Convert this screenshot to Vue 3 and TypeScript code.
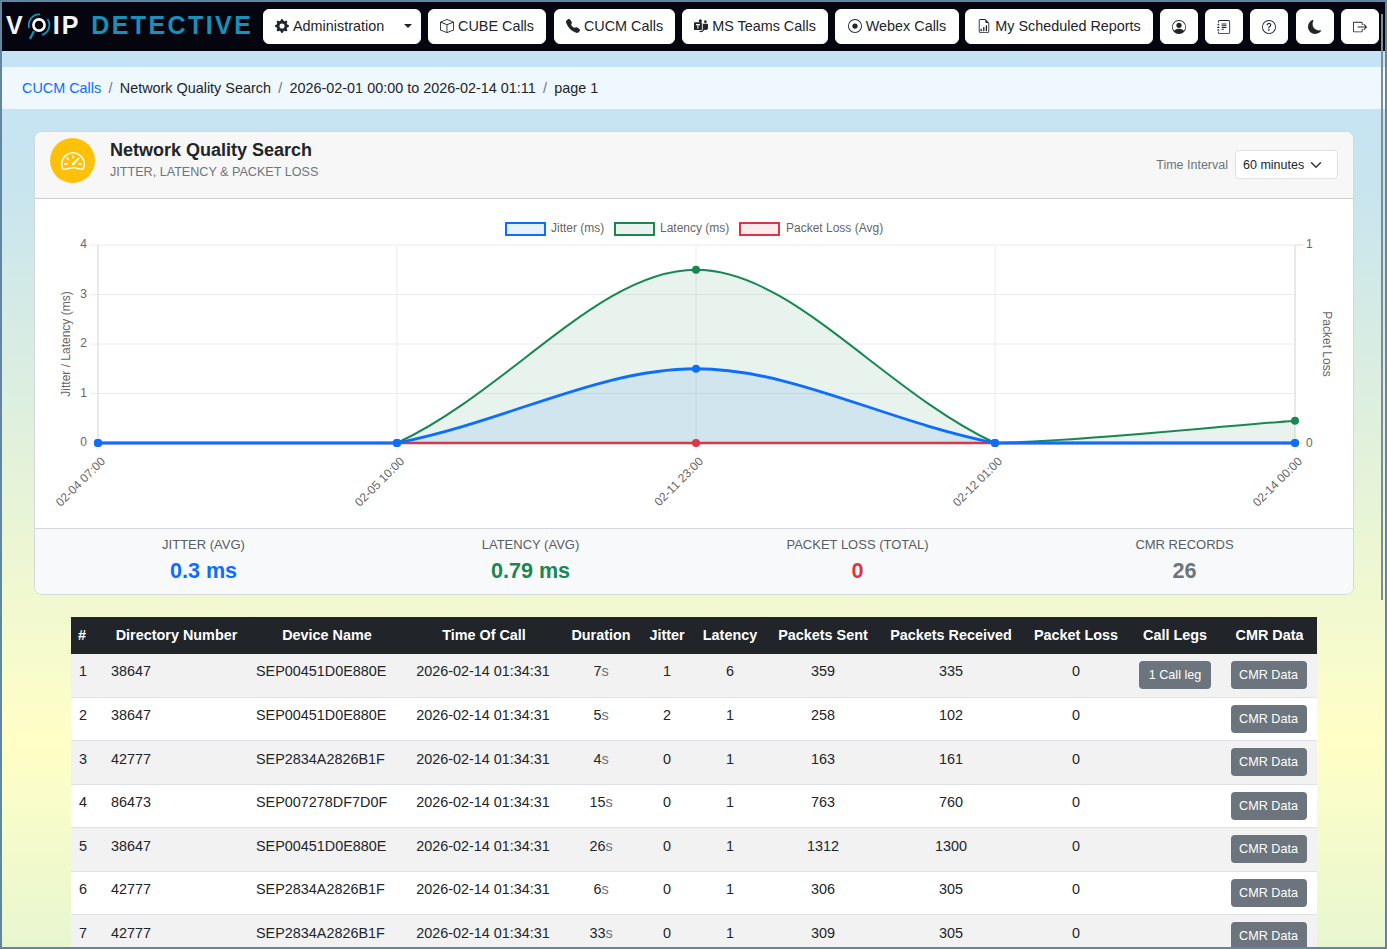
<script setup lang="ts">
const PL = 98, PR = 1295, PT = 245, PB = 443
const xs = [98, 397, 696, 995, 1295]
const yOf = (v: number) => PB - (v / 4) * (PB - PT)

type Pt = { x: number; y: number }
// Segment shapes fitted to the chart: [c1 dx, c1 dy, c2 dx, c2 dy] as fractions of the segment
const shapes: number[][] = [
  [0.3, 0, 0.7, 1],
  [0.378, 0.306, 0.679, 1],
  [0.321, 0, 0.622, 0.694],
  [0.3, 0.1, 0.7, 0.7],
]
function curve(vals: number[]): { line: string; area: string; pts: Pt[] } {
  const pts: Pt[] = vals.map((v, i) => ({ x: xs[i], y: yOf(v) }))
  let line = `M${pts[0].x} ${pts[0].y}`
  for (let i = 1; i < pts.length; i++) {
    const a = pts[i - 1]
    const b = pts[i]
    const [p, q, r, s] = shapes[i - 1]
    const dx = b.x - a.x
    const dy = b.y - a.y
    line += ` C${a.x + p * dx} ${a.y + q * dy} ${a.x + r * dx} ${a.y + s * dy} ${b.x} ${b.y}`
  }
  return { line, area: `${line} L${PR} ${PB} L${PL} ${PB} Z`, pts }
}

const series = [
  { name: 'loss', color: '#dc3545', fill: 'rgba(220,53,69,.1)', sw: 2.5, r: 4, ...curve([0, 0, 0, 0, 0]) },
  { name: 'latency', color: '#198754', fill: 'rgba(25,135,84,.1)', sw: 2, r: 4, ...curve([0, 0, 3.5, 0, 0.45]) },
  { name: 'jitter', color: '#0d6efd', fill: 'rgba(13,110,253,.1)', sw: 2.8, r: 4, ...curve([0, 0, 1.5, 0, 0]) },
]
const hGrid = [0, 1, 2, 3, 4]
const xLabels = ['02-04 07:00', '02-05 10:00', '02-11 23:00', '02-12 01:00', '02-14 00:00']
const legend = [
  { label: 'Jitter (ms)', color: '#0d6efd', fill: '#e7f0ff', x: 505, tx: 551 },
  { label: 'Latency (ms)', color: '#198754', fill: '#e8f3ee', x: 614, tx: 660 },
  { label: 'Packet Loss (Avg)', color: '#dc3545', fill: '#fcebed', x: 739, tx: 786 },
]

const stats = [
  { label: 'JITTER (AVG)', value: '0.3 ms', cls: 'blue' },
  { label: 'LATENCY (AVG)', value: '0.79 ms', cls: 'green' },
  { label: 'PACKET LOSS (TOTAL)', value: '0', cls: 'red' },
  { label: 'CMR RECORDS', value: '26', cls: 'grey' },
]

const headers = ['#', 'Directory Number', 'Device Name', 'Time Of Call', 'Duration', 'Jitter', 'Latency', 'Packets Sent', 'Packets Received', 'Packet Loss', 'Call Legs', 'CMR Data']
const colWidths = [32, 143, 162, 152, 82, 50, 76, 110, 146, 104, 94, 95]
const rows = [
  { dn: '38647', dev: 'SEP00451D0E880E', dur: 7, j: 1, l: 6, s: 359, r: 335, legs: true },
  { dn: '38647', dev: 'SEP00451D0E880E', dur: 5, j: 2, l: 1, s: 258, r: 102 },
  { dn: '42777', dev: 'SEP2834A2826B1F', dur: 4, j: 0, l: 1, s: 163, r: 161 },
  { dn: '86473', dev: 'SEP007278DF7D0F', dur: 15, j: 0, l: 1, s: 763, r: 760 },
  { dn: '38647', dev: 'SEP00451D0E880E', dur: 26, j: 0, l: 1, s: 1312, r: 1300 },
  { dn: '42777', dev: 'SEP2834A2826B1F', dur: 6, j: 0, l: 1, s: 306, r: 305 },
  { dn: '42777', dev: 'SEP2834A2826B1F', dur: 33, j: 0, l: 1, s: 309, r: 305 },
]
</script>

<template>
  <div class="frame">
    <div class="scrollbar"></div>
    <nav class="navbar">
      <div class="logo">
        <span class="logo-white">V</span>
        <svg class="logo-o" viewBox="0 0 24 30" width="24" height="30" aria-hidden="true">
          <circle cx="12" cy="15" r="5.6" fill="none" stroke="#fff" stroke-width="2.6" />
          <path d="M2.2 18 A10.5 10.5 0 0 1 13 4.5" fill="none" stroke="#1a8fb8" stroke-width="1.8" />
          <path d="M20.5 9 A10.5 10.5 0 0 1 15 25" fill="none" stroke="#1a8fb8" stroke-width="1.8" />
          <path d="M7 21 L3 29" fill="none" stroke="#1a8fb8" stroke-width="2.2" />
        </svg>
        <span class="logo-white ip">IP</span>
        <span class="logo-blue">DETECTIVE</span>
      </div>
      <div class="nav-items">
        <button class="nb admin">
          <svg class="ic" viewBox="0 0 16 16"><path d="M9.405 1.05c-.413-1.4-2.397-1.4-2.81 0l-.1.34a1.464 1.464 0 0 1-2.105.872l-.31-.17c-1.283-.698-2.686.705-1.987 1.987l.169.311c.446.82.023 1.841-.872 2.105l-.34.1c-1.4.413-1.4 2.397 0 2.81l.34.1a1.464 1.464 0 0 1 .872 2.105l-.17.31c-.698 1.283.705 2.686 1.987 1.987l.311-.169a1.464 1.464 0 0 1 2.105.872l.1.34c.413 1.4 2.397 1.4 2.81 0l.1-.34a1.464 1.464 0 0 1 2.105-.872l.31.17c1.283.698 2.686-.705 1.987-1.987l-.169-.311a1.464 1.464 0 0 1 .872-2.105l.34-.1c1.4-.413 1.4-2.397 0-2.81l-.34-.1a1.464 1.464 0 0 1-.872-2.105l.17-.31c.698-1.283-.705-2.686-1.987-1.987l-.311.169a1.464 1.464 0 0 1-2.105-.872l-.1-.34zM8 10.93a2.929 2.929 0 1 1 0-5.86 2.929 2.929 0 0 1 0 5.858z" /></svg>
          <span>Administration</span>
          <i class="caret"></i>
        </button>
        <button class="nb w118">
          <svg class="ic" viewBox="0 0 16 16"><path d="M8.186 1.113a.5.5 0 0 0-.372 0L1.846 3.5 8 5.961 14.154 3.5 8.186 1.113zM15 4.239l-6.5 2.6v7.922l6.5-2.6V4.24zM7.5 14.762V6.838L1 4.239v7.925l6.5 2.6zM7.443.184a1.5 1.5 0 0 1 1.114 0l7.129 2.852A.5.5 0 0 1 16 3.5v8.662a1 1 0 0 1-.629.928l-7.185 2.874a.5.5 0 0 1-.372 0L.63 13.09a1 1 0 0 1-.63-.928V3.5a.5.5 0 0 1 .314-.464L7.443.184z" /></svg>
          <span>CUBE Calls</span>
        </button>
        <button class="nb w121">
          <svg class="ic" viewBox="0 0 16 16"><path d="M1.885.511a1.745 1.745 0 0 1 2.61.163L6.29 2.98c.329.423.445.974.315 1.494l-.547 2.19a.678.678 0 0 0 .178.643l2.457 2.457a.678.678 0 0 0 .644.178l2.189-.547a1.745 1.745 0 0 1 1.494.315l2.306 1.794c.829.645.905 1.87.163 2.611l-1.034 1.034c-.74.74-1.846 1.065-2.877.702a18.634 18.634 0 0 1-7.01-4.42 18.634 18.634 0 0 1-4.42-7.009c-.362-1.03-.037-2.137.703-2.877L1.885.511z" /></svg>
          <span>CUCM Calls</span>
        </button>
        <button class="nb w146">
          <svg class="ic" viewBox="0 0 16 16">
            <rect x="0" y="3.6" width="9" height="9" rx="1" />
            <path d="M2.2 5.8h4.6v1.2H5.1v4H3.9V7H2.2z" fill="#fff" />
            <circle cx="7.2" cy="2.2" r="1.8" />
            <circle cx="13" cy="3" r="1.5" />
            <path d="M10 5.5h5.2c.5 0 .8.3.8.8V10c0 1.6-1.2 2.7-2.6 2.7-.8 0-1.4-.3-1.9-.7-.5 2-1.9 3-3.4 3-1 0-1.9-.5-2.4-1.3h2.3c.9 0 2-.9 2-2z" />
          </svg>
          <span>MS Teams Calls</span>
        </button>
        <button class="nb w124">
          <svg class="ic" viewBox="0 0 16 16">
            <path d="M8 15A7 7 0 1 1 8 1a7 7 0 0 1 0 14zm0 1A8 8 0 1 0 8 0a8 8 0 0 0 0 16z" />
            <circle cx="8" cy="8" r="3" />
          </svg>
          <span>Webex Calls</span>
        </button>
        <button class="nb w188">
          <svg class="ic" viewBox="0 0 16 16">
            <path d="M10 13.5a.5.5 0 0 0 .5.5h.5a.5.5 0 0 0 .5-.5v-6a.5.5 0 0 0-.5-.5h-.5a.5.5 0 0 0-.5.5v6zm-2.5.5a.5.5 0 0 1-.5-.5v-4a.5.5 0 0 1 .5-.5h.5a.5.5 0 0 1 .5.5v4a.5.5 0 0 1-.5.5h-.5zm-3 0a.5.5 0 0 1-.5-.5v-2a.5.5 0 0 1 .5-.5h.5a.5.5 0 0 1 .5.5v2a.5.5 0 0 1-.5.5h-.5z" />
            <path d="M14 14V4.5L9.5 0H4a2 2 0 0 0-2 2v12a2 2 0 0 0 2 2h8a2 2 0 0 0 2-2zM9.5 3A1.5 1.5 0 0 0 11 4.5h2V14a1 1 0 0 1-1 1H4a1 1 0 0 1-1-1V2a1 1 0 0 1 1-1h5.5v2z" />
          </svg>
          <span>My Scheduled Reports</span>
        </button>
        <button class="nb sq">
          <svg class="ic" viewBox="0 0 16 16">
            <path d="M11 6a3 3 0 1 1-6 0 3 3 0 0 1 6 0z" />
            <path d="M0 8a8 8 0 1 1 16 0A8 8 0 0 1 0 8zm8-7a7 7 0 0 0-5.468 11.37C3.242 11.226 4.805 10 8 10s4.757 1.225 5.468 2.37A7 7 0 0 0 8 1z" />
          </svg>
        </button>
        <button class="nb sq">
          <svg class="ic" viewBox="0 0 16 16">
            <path d="M5 10.5a.5.5 0 0 1 .5-.5h2a.5.5 0 0 1 0 1h-2a.5.5 0 0 1-.5-.5zm0-2a.5.5 0 0 1 .5-.5h5a.5.5 0 0 1 0 1h-5a.5.5 0 0 1-.5-.5zm0-2a.5.5 0 0 1 .5-.5h5a.5.5 0 0 1 0 1h-5a.5.5 0 0 1-.5-.5zm0-2a.5.5 0 0 1 .5-.5h5a.5.5 0 0 1 0 1h-5a.5.5 0 0 1-.5-.5z" />
            <path d="M3 0h10a2 2 0 0 1 2 2v12a2 2 0 0 1-2 2H3a2 2 0 0 1-2-2v-1h1v1a1 1 0 0 0 1 1h10a1 1 0 0 0 1-1V2a1 1 0 0 0-1-1H3a1 1 0 0 0-1 1v1H1V2a2 2 0 0 1 2-2z" />
            <path d="M1 5v-.5a.5.5 0 0 1 1 0V5h.5a.5.5 0 0 1 0 1h-2a.5.5 0 0 1 0-1H1zm0 3v-.5a.5.5 0 0 1 1 0V8h.5a.5.5 0 0 1 0 1h-2a.5.5 0 0 1 0-1H1zm0 3v-.5a.5.5 0 0 1 1 0v.5h.5a.5.5 0 0 1 0 1h-2a.5.5 0 0 1 0-1H1z" />
          </svg>
        </button>
        <button class="nb sq">
          <svg class="ic" viewBox="0 0 16 16">
            <path d="M8 15A7 7 0 1 1 8 1a7 7 0 0 1 0 14zm0 1A8 8 0 1 0 8 0a8 8 0 0 0 0 16z" />
            <path d="M5.255 5.786a.237.237 0 0 0 .241.247h.825c.138 0 .248-.113.266-.25.09-.656.54-1.134 1.342-1.134.686 0 1.314.343 1.314 1.168 0 .635-.374.927-.965 1.371-.673.489-1.206 1.06-1.168 1.987l.003.217a.25.25 0 0 0 .25.246h.811a.25.25 0 0 0 .25-.25v-.105c0-.718.273-.927 1.01-1.486.609-.463 1.244-.977 1.244-2.056 0-1.511-1.276-2.241-2.673-2.241-1.267 0-2.655.59-2.75 2.286zm1.557 5.763c0 .533.425.927 1.01.927.609 0 1.028-.394 1.028-.927 0-.552-.42-.94-1.029-.94-.584 0-1.009.388-1.009.94z" />
          </svg>
        </button>
        <button class="nb sq moon">
          <svg class="ic" viewBox="0 0 16 16"><path d="M6 .278a.768.768 0 0 1 .08.858 7.208 7.208 0 0 0-.878 3.46c0 4.021 3.278 7.277 7.318 7.277.527 0 1.04-.055 1.533-.16a.787.787 0 0 1 .81.316.733.733 0 0 1-.031.893A8.349 8.349 0 0 1 8.344 16C3.734 16 0 12.286 0 7.71 0 4.266 2.114 1.312 5.124.06A.752.752 0 0 1 6 .278z" /></svg>
        </button>
        <button class="nb sq">
          <svg class="ic" viewBox="0 0 16 16">
            <path d="M10 12.5a.5.5 0 0 1-.5.5h-8a.5.5 0 0 1-.5-.5v-9a.5.5 0 0 1 .5-.5h8a.5.5 0 0 1 .5.5v2a.5.5 0 0 0 1 0v-2A1.5 1.5 0 0 0 9.5 2h-8A1.5 1.5 0 0 0 0 3.5v9A1.5 1.5 0 0 0 1.5 14h8a1.5 1.5 0 0 0 1.5-1.5v-2a.5.5 0 0 0-1 0v2z" />
            <path d="M15.854 8.354a.5.5 0 0 0 0-.708l-3-3a.5.5 0 0 0-.708.708L14.293 7.5H5.5a.5.5 0 0 0 0 1h8.793l-2.147 2.146a.5.5 0 0 0 .708.708l3-3z" />
          </svg>
        </button>
      </div>
    </nav>

    <div class="breadcrumb">
      <a class="crumb-link">CUCM Calls</a>
      <span class="sep">/</span>
      <span>Network Quality Search</span>
      <span class="sep">/</span>
      <span>2026-02-01 00:00 to 2026-02-14 01:11</span>
      <span class="sep">/</span>
      <span>page 1</span>
    </div>

    <section class="card">
      <header class="card-head">
        <div class="round">
          <svg viewBox="0 0 16 16" width="24" height="24" fill="#fff">
            <path d="M8 4a.5.5 0 0 1 .5.5V6a.5.5 0 0 1-1 0V4.5A.5.5 0 0 1 8 4zM3.732 5.732a.5.5 0 0 1 .707 0l.915.914a.5.5 0 1 1-.708.708l-.914-.915a.5.5 0 0 1 0-.707zM2 10a.5.5 0 0 1 .5-.5h1.586a.5.5 0 0 1 0 1H2.5A.5.5 0 0 1 2 10zm9.5 0a.5.5 0 0 1 .5-.5h1.5a.5.5 0 0 1 0 1H12a.5.5 0 0 1-.5-.5zm.754-4.246a.389.389 0 0 0-.527-.02L7.547 9.31a.91.91 0 1 0 1.302 1.258l3.434-4.297a.389.389 0 0 0-.029-.518z" />
            <path d="M0 10a8 8 0 1 1 15.547 2.661c-.442 1.253-1.845 1.602-2.932 1.25C11.309 13.488 9.475 13 8 13c-1.474 0-3.31.488-4.615.911-1.087.352-2.49.003-2.932-1.25A7.988 7.988 0 0 1 0 10zm8-7a7 7 0 0 0-6.603 9.329c.203.575.923.876 1.68.63C4.397 12.533 6.358 12 8 12s3.604.532 4.923.96c.757.245 1.477-.056 1.68-.631A7 7 0 0 0 8 3z" />
          </svg>
        </div>
        <div class="titles">
          <h2>Network Quality Search</h2>
          <p>JITTER, LATENCY &amp; PACKET LOSS</p>
        </div>
        <div class="interval">
          <label>Time Interval</label>
          <div class="select">
            <span>60 minutes</span>
            <svg viewBox="0 0 16 16" width="12" height="12"><path d="M2 5l6 6 6-6" fill="none" stroke="#343a40" stroke-width="2" stroke-linecap="round" stroke-linejoin="round" /></svg>
          </div>
        </div>
      </header>

      <div class="chart-wrap">
        <svg class="chart" viewBox="35 199 1318 329" width="1318" height="329">
          <g v-for="l in legend" :key="l.label">
            <rect :x="l.x + 1" y="223" width="39" height="12" :fill="l.fill" :stroke="l.color" stroke-width="2" />
            <text :x="l.tx" y="232" class="t12">{{ l.label }}</text>
          </g>

          <line v-for="v in hGrid" :key="'h' + v" :x1="PL - 8" :x2="PR" :y1="yOf(v)" :y2="yOf(v)" class="grid" />
          <line v-for="x in xs" :key="'v' + x" :x1="x" :x2="x" :y1="PT" :y2="PB + 8" class="grid" />
          <line :x1="PL" :x2="PL" :y1="PT" :y2="PB" class="axis" />
          <line :x1="PR" :x2="PR" :y1="PT" :y2="PB" class="axis" />
          <line :x1="PR" :x2="PR + 8" :y1="PT" :y2="PT" class="axis" />
          <line :x1="PR" :x2="PR + 8" :y1="PB" :y2="PB" class="axis" />

          <text v-for="v in hGrid" :key="'l' + v" x="87" :y="yOf(v) + 3" text-anchor="end" class="t12">{{ v }}</text>
          <text x="1306" y="248" class="t12">1</text>
          <text x="1306" y="447" class="t12">0</text>
          <text class="t12" text-anchor="middle" transform="translate(70 344) rotate(-90)">Jitter / Latency (ms)</text>
          <text class="t12" text-anchor="middle" transform="translate(1323 344) rotate(90)">Packet Loss</text>
          <text
            v-for="(t, i) in xLabels"
            :key="t"
            class="t12"
            text-anchor="end"
            :transform="`translate(${xs[i] + 8} 462) rotate(-45)`"
          >{{ t }}</text>

          <g v-for="s in series" :key="s.name">
            <path :d="s.area" :fill="s.fill" />
          </g>
          <g v-for="s in series" :key="s.name + 'l'">
            <path :d="s.line" fill="none" :stroke="s.color" :stroke-width="s.sw" />
            <circle v-for="p in s.pts" :key="p.x" :cx="p.x" :cy="p.y" :r="s.r" :fill="s.color" />
          </g>
        </svg>
      </div>

      <div class="stats">
        <div v-for="s in stats" :key="s.label" class="stat">
          <div class="stat-label">{{ s.label }}</div>
          <div class="stat-value" :class="s.cls">{{ s.value }}</div>
        </div>
      </div>
    </section>

    <div class="table-wrap">
      <table>
        <colgroup>
          <col v-for="(w, i) in colWidths" :key="i" :style="{ width: w + 'px' }" />
        </colgroup>
        <thead>
          <tr>
            <th v-for="h in headers" :key="h">{{ h }}</th>
          </tr>
        </thead>
        <tbody>
          <tr v-for="(r, i) in rows" :key="i">
            <td class="left">{{ i + 1 }}</td>
            <td class="left">{{ r.dn }}</td>
            <td class="left dev">{{ r.dev }}</td>
            <td class="time">2026-02-14 01:34:31</td>
            <td>{{ r.dur }}<span class="unit">s</span></td>
            <td>{{ r.j }}</td>
            <td>{{ r.l }}</td>
            <td>{{ r.s }}</td>
            <td>{{ r.r }}</td>
            <td>0</td>
            <td class="btn-cell"><button v-if="r.legs" class="btn">1 Call leg</button></td>
            <td class="btn-cell cmr"><button class="btn">CMR Data</button></td>
          </tr>
        </tbody>
      </table>
    </div>
  </div>
</template>

<style>
html, body { margin: 0; height: 100%; overflow: hidden; }
</style>

<style scoped>
.frame {
  position: relative;
  box-sizing: border-box;
  width: 1387px;
  height: 949px;
  overflow: hidden;
  border: 2px solid #5f86a3;
  background: linear-gradient(180deg, #c3e2f7 0%, #c8e5ee 20%, #ffffc6 78%, #e8f6d0 100%);
  font-family: "Liberation Sans", Arial, sans-serif;
  font-size: 14.4px;
  color: #212529;
}
.scrollbar {
  position: absolute;
  top: 12px;
  right: 2px;
  width: 2px;
  height: 586px;
  background: #808b92;
  z-index: 2;
}
.navbar {
  height: 49px;
  background: #05050f;
  display: flex;
  align-items: center;
  padding: 0 6px 0 4px;
  box-sizing: border-box;
}
.logo {
  width: 257px;
  flex: none;
  display: flex;
  align-items: center;
  font-weight: 700;
  font-size: 25px;
  letter-spacing: 2px;
  line-height: 30px;
  margin-top: -4px;
}
.logo-white { color: #f4f4f4; }
.logo-o { margin: 0 2px; flex: none; }
.ip { margin-right: 11px; }
.logo-blue { color: #1a8fb8; letter-spacing: 2.4px; }
.nav-items {
  display: flex;
  align-items: center;
  gap: 7px;
}
.nb {
  height: 35px;
  box-sizing: border-box;
  background: #fff;
  border: 1px solid #fff;
  border-radius: 6px;
  display: inline-flex;
  align-items: center;
  justify-content: center;
  gap: 4px;
  padding: 0 0 2px;
  font: 14.4px "Liberation Sans", Arial, sans-serif;
  color: #212529;
  flex: none;
}
.ic { width: 14px; height: 14px; fill: #212529; flex: none; }
.admin { width: 158px; justify-content: flex-start; padding-left: 11px; position: relative; }
.caret {
  position: absolute;
  right: 8px;
  top: 14px;
  border-top: 4.5px solid #212529;
  border-left: 4.5px solid transparent;
  border-right: 4.5px solid transparent;
}
.w118 { width: 118px; }
.w121 { width: 121px; margin-left: 1px; }
.w146 { width: 146px; }
.w124 { width: 124px; margin-right: -1px; }
.w188 { width: 188px; }
.sq { width: 38px; padding: 0; }
.moon { margin-left: 1px; }

.breadcrumb {
  margin-top: 16px;
  height: 42px;
  background: #eff7ff;
  display: flex;
  align-items: center;
  padding-left: 20px;
  box-sizing: border-box;
}
.crumb-link { color: #0d6efd; }
.sep { color: #6c757d; padding: 0 7.3px; }

.card {
  margin: 22px 31px 0 32px;
  height: 464px;
  box-sizing: border-box;
  background: #fff;
  border: 1px solid #d5d8da;
  border-radius: 8px;
  overflow: hidden;
  display: flex;
  flex-direction: column;
}
.card-head {
  height: 67px;
  flex: none;
  box-sizing: border-box;
  background: #f7f7f7;
  border-bottom: 1px solid #cfcfcf;
  display: flex;
  align-items: flex-start;
  padding: 6px 15px 0;
}
.round {
  width: 45px;
  height: 45px;
  border-radius: 50%;
  background: #ffc107;
  display: flex;
  align-items: center;
  justify-content: center;
  flex: none;
}
.titles { margin: 2px 0 0 15px; flex: 1; }
.titles h2 { margin: 0; font-size: 18px; line-height: 21px; font-weight: 700; color: #212529; }
.titles p { margin: 2px 0 0; font-size: 12.6px; line-height: 18px; color: #6c757d; }
.interval { display: flex; align-items: center; gap: 7px; margin-top: 12px; }
.interval label { font-size: 12.5px; color: #6c757d; }
.select {
  width: 103px;
  height: 29px;
  box-sizing: border-box;
  background: #fff;
  border: 1px solid #dee2e6;
  border-radius: 4px;
  display: flex;
  align-items: center;
  gap: 6px;
  padding-left: 7px;
  font-size: 12.5px;
  color: #212529;
}
.chart-wrap { height: 329px; flex: none; }
.chart { display: block; }
.t12 { font: 12px "Liberation Sans", Arial, sans-serif; fill: #666; }
.grid { stroke: #ececec; stroke-width: 1; }
.axis { stroke: #dcdcdc; stroke-width: 1; }
.stats {
  flex: 1;
  background: #f8f9fa;
  border-top: 1px solid #d5d8da;
  display: grid;
  grid-template-columns: repeat(4, 1fr);
  padding: 0 5px;
}
.stat { text-align: center; padding-top: 8px; }
.stat-label { font-size: 13px; line-height: 16px; color: #565e64; }
.stat-value { font-size: 21.6px; font-weight: 700; line-height: 28px; margin-top: 4px; }
.blue { color: #0d6efd; }
.green { color: #198754; }
.red { color: #dc3545; }
.grey { color: #6c757d; }

.table-wrap { margin: 22px 0 0 69px; width: 1246px; }
table { border-collapse: collapse; table-layout: fixed; width: 1246px; background: #fff; }
th {
  background: #212529;
  color: #fff;
  height: 36.5px;
  padding: 0 0 1px;
  box-sizing: border-box;
  font-size: 14.4px;
  font-weight: 700;
  text-align: center;
}
th:first-child { text-align: left; padding-left: 7px; }
th:nth-child(2) { padding-left: 4px; }
td {
  height: 43.5px;
  box-sizing: border-box;
  padding: 7.8px 0 0;
  vertical-align: top;
  line-height: 21px;
  text-align: center;
  border-bottom: 1px solid #dee2e6;
}
tbody tr:nth-child(odd) td { background: #f2f2f2; }
td.left { text-align: left; padding-left: 8px; }
td.dev { padding-left: 10px; }
td.time { padding-right: 2px; }
.unit { color: #6c757d; }
td.btn-cell { padding-top: 7px; }
td.cmr { padding-right: 2px; }
.btn {
  height: 28px;
  width: 76px;
  padding: 0;
  box-sizing: border-box;
  background: #6c757d;
  color: #fff;
  border: 0;
  border-radius: 4px;
  font: 12.6px "Liberation Sans", Arial, sans-serif;
}
td:nth-child(11) .btn { width: 72px; }
</style>
